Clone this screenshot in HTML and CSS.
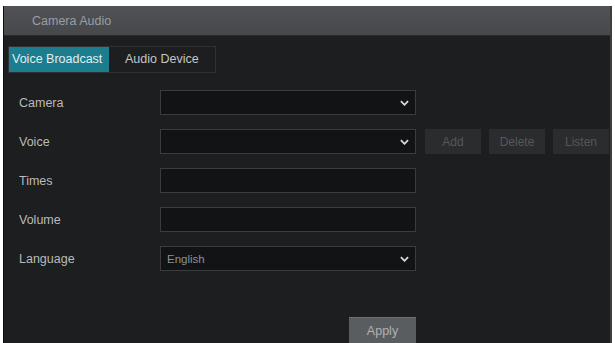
FILE: index.html
```html
<!DOCTYPE html>
<html lang="en">
<head>
    <meta charset="UTF-8">
    <meta name="viewport" content="width=device-width, initial-scale=1.0">
    <title>Camera Audio</title>
    <link rel="stylesheet" href="styles.css">
</head>
<body>
    <div class="window">
        <div class="title">Camera Audio</div>

        <div class="tabs">
            <div class="tab active">Voice Broadcast</div>
            <div class="tab">Audio Device</div>
        </div>

        <div class="form">
            <label>Camera</label>
            <div class="field select"><span></span><svg viewBox="0 0 10 6"><path d="M1 1l4 4 4-4"/></svg></div>
            <div></div>

            <label>Voice</label>
            <div class="field select"><span></span><svg viewBox="0 0 10 6"><path d="M1 1l4 4 4-4"/></svg></div>
            <div class="btns">
                <button class="btn">Add</button>
                <button class="btn">Delete</button>
                <button class="btn">Listen</button>
            </div>

            <label>Times</label>
            <div class="field"></div>
            <div></div>

            <label>Volume</label>
            <div class="field"></div>
            <div></div>

            <label>Language</label>
            <div class="field select"><span>English</span><svg viewBox="0 0 10 6"><path d="M1 1l4 4 4-4"/></svg></div>
            <div></div>

            <div></div>
            <button class="apply">Apply</button>
        </div>
    </div>
</body>
</html>
```

FILE: styles.css
```css
* {margin: 0; padding: 0; box-sizing: border-box;}
html, body {height: 100%; overflow: hidden;}
body {background: #fff; padding: 6px 3px 0 3px; font-family: "Liberation Sans", Arial, sans-serif; font-size: 12.5px;}

.window {height: 100%; background: #1c1e1f; border-left: 1px solid #0d0e0f; border-right: 2px solid #3c3e40;}

.title {height: 30px; line-height: 30px; padding-left: 28px; color: #9a9ea3; font-size: 12.5px;
    background: linear-gradient(#505256, #46484c); border-bottom: 1px solid #2a2b2d;}

.tabs {display: inline-flex; margin: 10px 0 0 4px; border: 1px solid #2f3133; height: 27px;}
.tab {padding: 0 16px; line-height: 25px; color: #c4c6c8; font-size: 12.5px;}
.tab.active {width: 100px; padding: 0 0 0 3px; background: #1c7d8e; color: #e2eef0;}

.form {display: grid; grid-template-columns: 141px 256px auto; grid-auto-rows: 25px; row-gap: 14px;
    margin: 17px 0 0 15px; align-items: center;}
.form label {color: #b9bbbd;}

.field {height: 25px; background: #111314; border: 1px solid #3a3c3f; display: flex; align-items: center;
    justify-content: space-between; padding: 0 6px 0 6px; color: #8e9194; font-size: 11.5px;}
.field svg {width: 9px; height: 6px; fill: none; stroke: #d8dadc; stroke-width: 2;}

.btns {display: flex; gap: 8px; margin-left: 9px;}
.btn {width: 56px; height: 25px; border: none; background: #2a2c2e; color: #55585b;
    font-family: inherit; font-size: 12px;}

.apply {grid-column: 2; justify-self: end; align-self: start; margin-top: 32px; width: 67px; height: 27px;
    border: none; border-top: 1px solid #6e7174; background: #5a5d60; color: #aeb1b4;
    font-family: inherit; font-size: 12.5px;}
```
